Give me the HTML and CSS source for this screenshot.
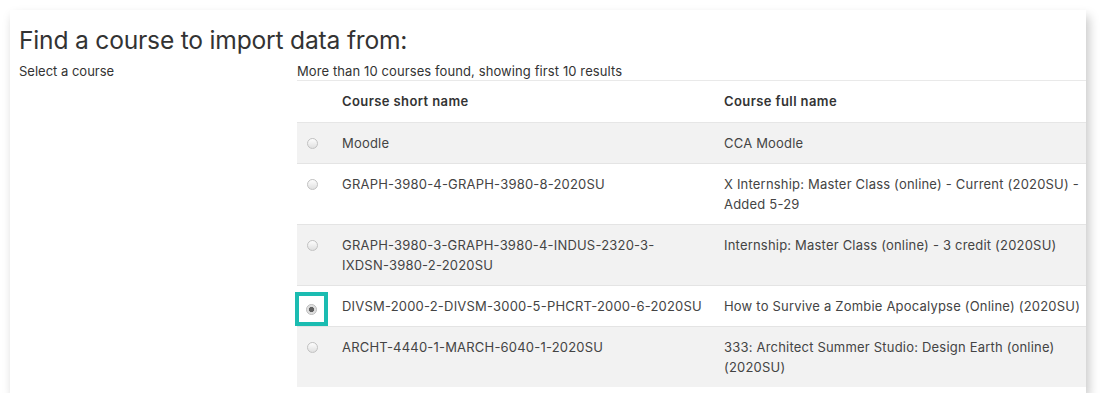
FILE: index.html
```html
<!DOCTYPE html>
<html lang="en">
<head>
<meta charset="utf-8">
<title>Import course</title>
<link rel="stylesheet" href="styles.css">
</head>
<body>
<div class="card">
  <h2 class="title">Find a course to import data from:</h2>
  <div class="form-row">
    <div class="label">Select a course</div>
    <div class="field">
      <div class="count">More than 10 courses found, showing first 10 results</div>
      <table class="courses">
        <thead>
          <tr>
            <th class="c-radio"></th>
            <th class="c-short">Course short name</th>
            <th class="c-full">Course full name</th>
          </tr>
        </thead>
        <tbody>
          <tr class="odd">
            <td class="c-radio"><span class="radio"></span></td>
            <td>Moodle</td>
            <td>CCA Moodle</td>
          </tr>
          <tr>
            <td class="c-radio"><span class="radio"></span></td>
            <td>GRAPH-3980-4-GRAPH-3980-8-2020SU</td>
            <td>X Internship: Master Class (online) - Current (2020SU) - Added 5-29</td>
          </tr>
          <tr class="odd">
            <td class="c-radio"><span class="radio"></span></td>
            <td>GRAPH-3980-3-GRAPH-3980-4-INDUS-2320-3-<br>IXDSN-3980-2-2020SU</td>
            <td>Internship: Master Class (online) - 3 credit (2020SU)</td>
          </tr>
          <tr>
            <td class="c-radio"><span class="focus"><span class="radio checked"></span></span></td>
            <td>DIVSM-2000-2-DIVSM-3000-5-PHCRT-2000-6-2020SU</td>
            <td>How to Survive a Zombie Apocalypse (Online) (2020SU)</td>
          </tr>
          <tr class="odd">
            <td class="c-radio"><span class="radio"></span></td>
            <td>ARCHT-4440-1-MARCH-6040-1-2020SU</td>
            <td>333: Architect Summer Studio: Design Earth (online) (2020SU)</td>
          </tr>
        </tbody>
      </table>
    </div>
  </div>
</div>
</body>
</html>
```
FILE: styles.css
```css
html, body {
  margin: 0;
  padding: 0;
  background: #ffffff;
}
body {
  font-family: Inter, "Liberation Sans", sans-serif;
  color: #3b3b3b;
}
.card {
  margin: 10px 0 0 10px;
  width: 1076px;
  height: 383px;
  background: #fff;
  box-shadow: 3px 6px 10px rgba(0,0,0,0.22);
  overflow: hidden;
  padding: 0 0 0 9px;
  box-sizing: border-box;
}
.title {
  margin: 0;
  padding-top: 15px;
  font-size: 24.6px;
  line-height: 30px;
  font-weight: 400;
  color: #333;
  letter-spacing: -0.2px;
}
.form-row {
  display: flex;
  margin-top: 7px;
}
.label {
  width: 278px;
  flex: none;
  font-size: 13px;
  line-height: 18px;
  color: #333;
}
.field {
  flex: none;
  width: 803px;
}
.count {
  font-size: 13px;
  line-height: 18px;
  color: #333;
  letter-spacing: 0.1px;
}
.courses {
  border-collapse: collapse;
  width: 803px;
  border-top: 1px solid #e9e9e9;
  font-size: 13px;
  line-height: 20px;
  color: #444;
  table-layout: fixed;
}
.courses th {
  text-align: left;
  font-weight: 600;
  color: #333;
  padding: 10px 11px 11px;
  border-bottom: 1px solid #e6e6e6;
  letter-spacing: 0.4px;
}
.courses td {
  padding: 10px 11px;
  vertical-align: top;
  border-top: 1px solid #e4e4e4;
  letter-spacing: 0.2px;
}
.courses tr.odd td { background: #f2f2f2; }
.courses .c-radio { width: 34px; padding: 0; }
.c-short { width: 360px; }
.c-full { width: 365px; }
td.c-radio { position: relative; }
.radio {
  display: block;
  width: 11px;
  height: 11px;
  margin-top: 15px;
  margin-left: 10px;
  border-radius: 50%;
  border: 1px solid #c2c2c2;
  background: linear-gradient(#fdfdfd, #e0e0e0);
  box-sizing: border-box;
}
.radio.checked {
  margin: 0;
  background: radial-gradient(circle, #5f5f5f 0 2.3px, #d8d8d8 2.9px, #f2f2f2 100%);
  border-color: #bdbdbd;
}
.focus {
  position: absolute;
  left: -2px;
  top: 6px;
  width: 25px;
  height: 26px;
  border: 4px solid #1bbcb1;
  display: flex;
  align-items: center;
  justify-content: center;
}
```
